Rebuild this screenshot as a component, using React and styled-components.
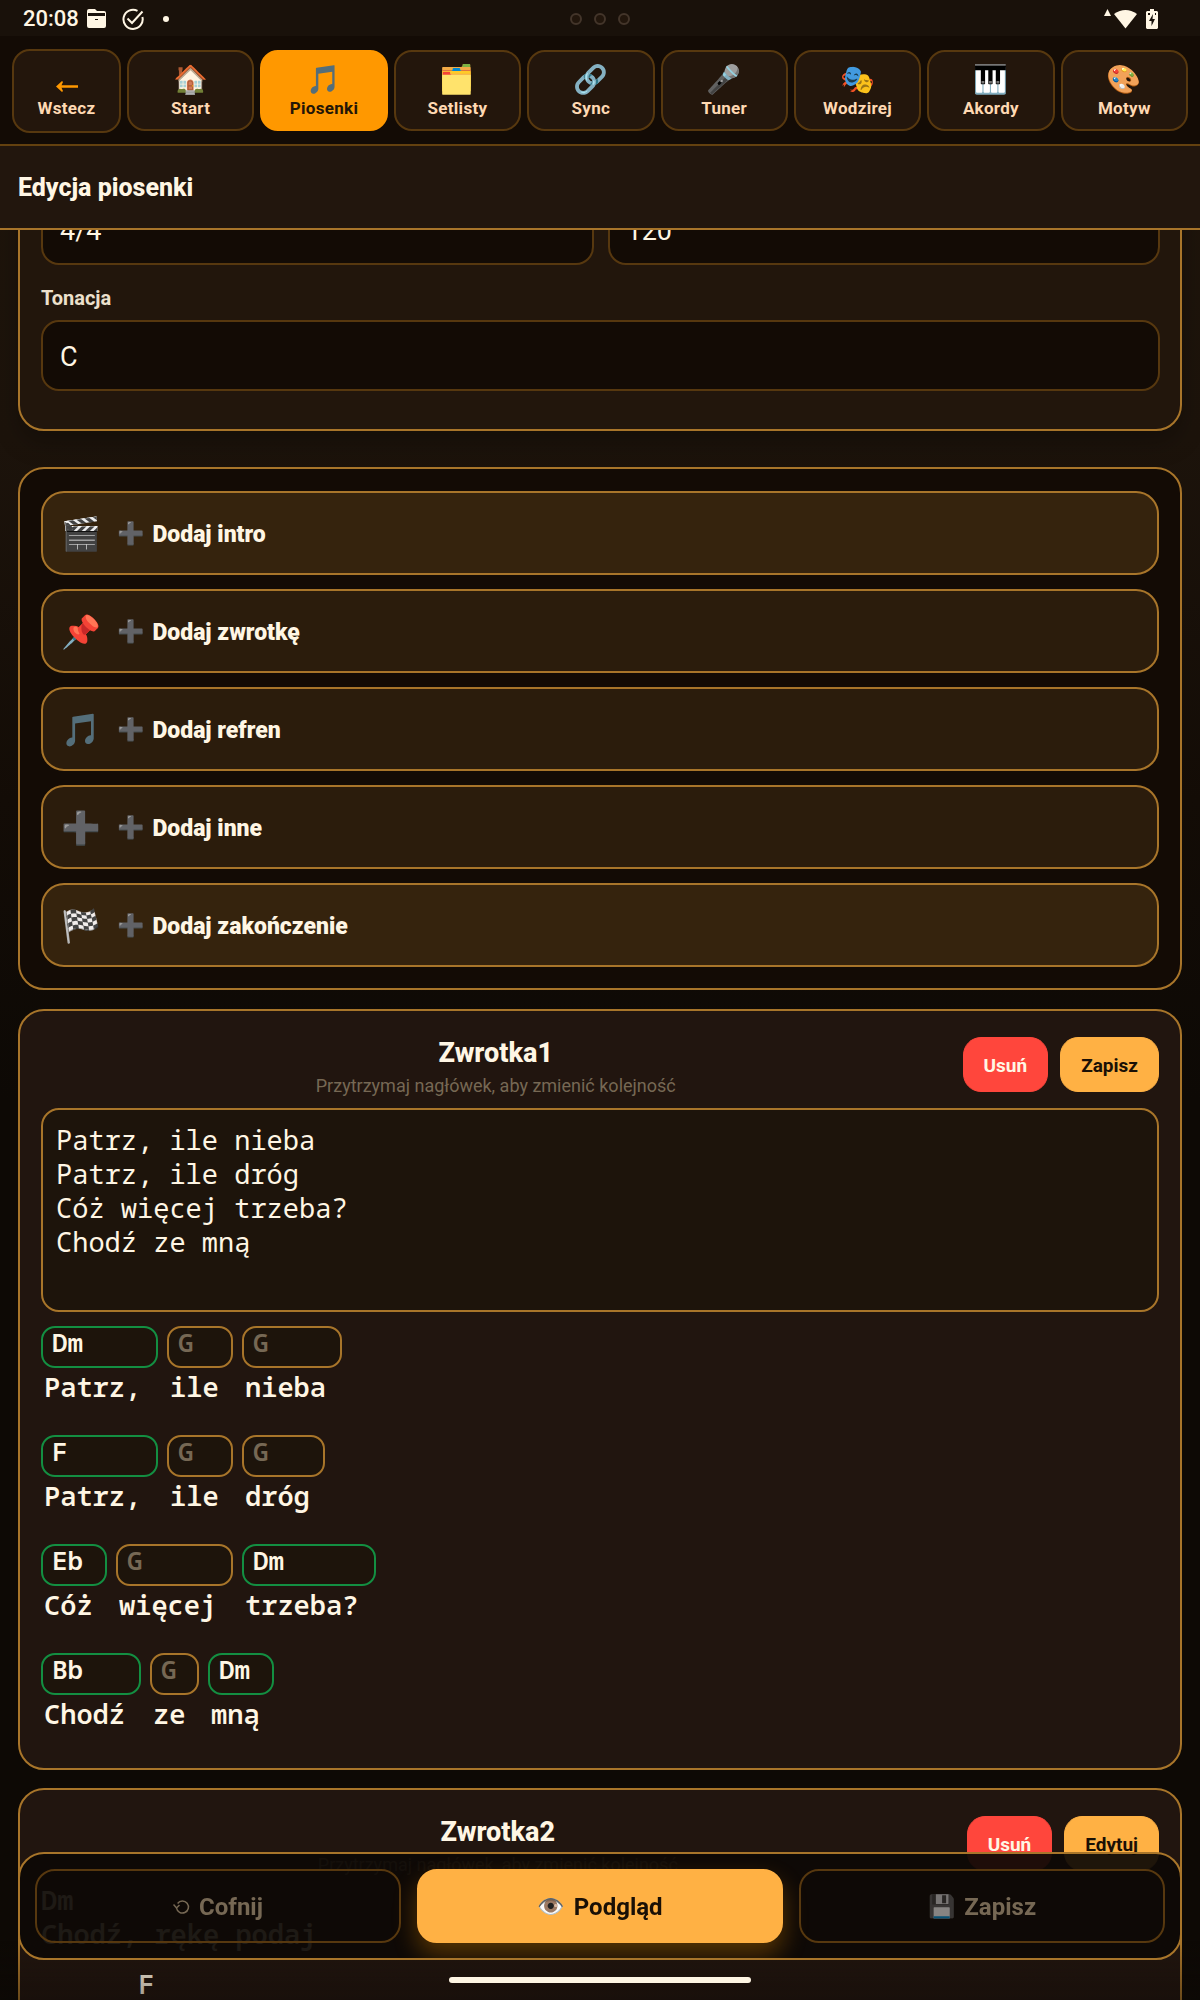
import React, { useState } from "react";
import styled, { createGlobalStyle } from "styled-components";

const c = {
  gold: "#a8752a",
  brown: "#64410f",
  text: "#fff6e4",
  muted: "#766854",
  accent: "#ffb144",
  dark: "#130b05",
};

const MONO = '"Noto Sans Mono", "DejaVu Sans Mono", monospace';
const UI = 'Roboto, "Noto Color Emoji", sans-serif';

/* styled-components */
const GlobalStyle = createGlobalStyle`
  * { box-sizing: border-box; }
  body {
    margin: 0;
    background: #0d0905;
    color: ${c.text};
    font-family: ${UI};
  }
  button, input, textarea { font-family: inherit; color: inherit; }
  h1, h2, p { margin: 0; }
`;

const Screen = styled.div`
  height: 100vh;
  display: flex;
  flex-direction: column;
  overflow: hidden;
  background: linear-gradient(180deg, #1f150b 0%, #1c130b 22%, #130c06 40%, #0d0905 55%, #0d0905 100%);
`;

const StatusBar = styled.div`
  flex: none;
  height: 36px;
  padding: 0 23px;
  display: grid;
  grid-template-columns: 1fr auto 1fr;
  align-items: center;
  background: #19110a;
`;
const StatusGroup = styled.div`
  display: flex;
  align-items: center;
  gap: 12px;
`;
const StatusLeft = styled(StatusGroup)`
  gap: 16px;
`;
const StatusRight = styled(StatusGroup)`
  justify-content: flex-end;
  gap: 9px;
  padding-right: 19px;
`;
const ClockGroup = styled(StatusGroup)`
  gap: 8px;
`;
const Clock = styled.span`
  padding-top: 1px;
  font-size: 22px;
  font-weight: 500;
  line-height: 36px;
`;
const Dot = styled.span`
  width: 12px;
  height: 12px;
  border: 2px solid #43352a;
  border-radius: 50%;
  background: #22160c;
`;
const Bullet = styled.span`
  width: 6px;
  height: 6px;
  margin-left: 3px;
  border-radius: 50%;
  background: ${c.text};
`;

const Nav = styled.nav`
  flex: none;
  height: 110px;
  padding: 1px 12px 0;
  display: flex;
  align-items: center;
  gap: 6px;
  background: ${c.dark};
  border-bottom: 2px solid ${c.brown};
`;
const NavButton = styled.button`
  flex: 1 1 0;
  height: 81px;
  padding: 0;
  display: flex;
  flex-direction: column;
  align-items: center;
  justify-content: center;
  gap: 1px;
  border: 2px solid ${(props) => (props.$active ? "#ff9800" : "#57380f")};
  border-radius: 18px;
  background: ${(props) => (props.$active ? "#ff9800" : "#23160c")};
  color: ${(props) => (props.$active ? "#241607" : "#ffd9b3")};
  font-size: 17px;
  font-weight: 700;
  line-height: 20px;
  letter-spacing: 0.3px;
`;
const BackButton = styled(NavButton)`
  flex: 0 0 109px;
  height: 84px;
  padding-top: 18px;
  gap: 6px;
`;

const TitleBar = styled.header`
  flex: none;
  height: 84px;
  padding: 2px 18px 0;
  display: flex;
  align-items: center;
  background: #22160d;
  border-bottom: 2px solid ${c.gold};
`;
const Title = styled.h1`
  font-size: 25px;
  font-weight: 800;
  line-height: 30px;
`;

const Content = styled.main`
  flex: 1;
  min-height: 0;
  overflow: hidden;
  padding: 0 18px;
`;

const Panel = styled.section`
  padding: 21px;
  border: 2px solid ${c.gold};
  border-radius: 26px;
  background: ${(props) => props.$bg};
`;
const FormPanel = styled(Panel)`
  margin: -59px 0 36px;
  padding: 21px 20px 38px 21px;
  display: grid;
  grid-template-columns: 1fr 1fr;
  column-gap: 14px;
  box-shadow: 0 12px 24px rgba(0, 0, 0, 0.25);
`;
const Field = styled.input`
  width: 100%;
  height: 71px;
  padding: 2px 17px 0;
  border: 2px solid #57380f;
  border-radius: 18px;
  background: ${c.dark};
  font-size: 27px;
  outline: none;
`;
const FieldLabel = styled.label`
  grid-column: 1 / -1;
  padding: 21px 0 10px;
  font-size: 20px;
  font-weight: 700;
  line-height: 24px;
  color: #ece0cd;
`;
const WideField = styled.div`
  grid-column: 1 / -1;
`;

const AddPanel = styled(Panel)`
  display: flex;
  flex-direction: column;
  gap: 14px;
  padding-top: 22px;
`;
const AddButton = styled.button`
  height: 84px;
  padding: 2px 18px 0;
  display: flex;
  align-items: center;
  border: 2px solid ${c.gold};
  border-radius: 23px;
  background: ${(props) => (props.$strong ? "#35230d" : "#2b1c0c")};
  font-size: 23px;
  font-weight: 900;
  text-align: left;
`;
const AddIcon = styled.span`
  width: 56px;
  display: flex;
`;
const AddText = styled.span`
  display: flex;
  align-items: center;
  gap: 8px;
`;

const Emoji = styled.span`
  font-family: "Noto Color Emoji", sans-serif;
  font-size: ${(props) => props.$size}px;
  line-height: 1.2;
  opacity: ${(props) => (props.$dim ? 0.5 : 1)};
`;

const Verse = styled(Panel)`
  margin-top: ${(props) => props.$top}px;
  padding-bottom: 20px;
`;
const VerseHeader = styled.div`
  display: flex;
  align-items: flex-start;
  gap: 12px;
  padding-bottom: 6px;
`;
const VerseHeading = styled.div`
  flex: 1;
  padding-top: 4px;
  text-align: center;
`;
const VerseTitle = styled.h2`
  font-size: 27px;
  font-weight: 800;
  line-height: 34px;
`;
const Hint = styled.p`
  font-size: 18px;
  line-height: 32px;
  color: ${c.muted};
`;
const SmallButton = styled.button`
  height: 55px;
  margin-top: 5px;
  padding: 2px 20px 0;
  border: 1px solid ${(props) => (props.$danger ? "#ff463c" : c.accent)};
  border-radius: 18px;
  background: ${(props) => (props.$danger ? "#ff463c" : c.accent)};
  color: ${(props) => (props.$danger ? c.text : "#1a1006")};
  font-size: 19px;
  font-weight: 700;
`;
const Lyrics = styled.textarea`
  display: block;
  width: 100%;
  height: 204px;
  padding: 13px;
  border: 2px solid ${c.gold};
  border-radius: 18px;
  background: #1d140b;
  font-family: ${MONO};
  font-size: 27px;
  line-height: 34px;
  resize: none;
  outline: none;
`;

const ChordLine = styled.div`
  display: flex;
  gap: 9px;
  padding-top: 14px;
  height: 109px;
`;
const Word = styled.label`
  width: ${(props) => props.$len * 17 + 15}px;
  font-family: ${MONO};
  font-size: 27px;
  font-weight: 600;
  line-height: 38px;
  white-space: pre;
`;
const Chord = styled.input`
  display: block;
  width: 100%;
  height: 42px;
  padding: 0 8px 10px 9px;
  border: 2px solid ${(props) => (props.$set ? "#138f42" : c.gold)};
  border-radius: 14px;
  background: #1d140b;
  font-family: ${MONO};
  font-size: 26px;
  font-weight: 600;
  line-height: 28px;
  outline: none;
  &::placeholder {
    color: ${c.muted};
    opacity: 1;
  }
`;
const WordText = styled.span`
  padding-left: 3px;
`;
const Preview = styled.div`
  margin-top: -4px;
  font-family: ${MONO};
  font-size: 27px;
  font-weight: 600;
  line-height: 34px;
  white-space: pre;
`;
const PreviewLine = styled.div`
  margin-bottom: 16px;
`;

const Footer = styled.footer`
  position: fixed;
  left: 0;
  right: 0;
  bottom: 0;
  padding: 0 18px 17px;
  background: linear-gradient(180deg, rgba(13, 9, 5, 0) 60%, rgba(13, 9, 5, 0.4) 100%);
`;
const ActionBar = styled.div`
  height: 108px;
  padding: 15px;
  display: flex;
  gap: 16px;
  overflow: hidden;
  border: 2px solid ${c.gold};
  border-radius: 26px;
  background: rgba(13, 9, 5, 0.93);
`;
const Action = styled.button`
  flex: 1 1 0;
  height: 74px;
  padding-top: 3px;
  display: flex;
  align-items: center;
  justify-content: center;
  gap: 9px;
  border: 2px solid ${(props) => (props.$primary ? c.accent : "#57380f")};
  border-radius: 20px;
  background: ${(props) => (props.$primary ? c.accent : "transparent")};
  box-shadow: ${(props) =>
    props.$primary ? "0 12px 24px rgba(255, 152, 0, 0.3)" : "none"};
  color: ${(props) => (props.$primary ? "#1a1006" : c.muted)};
  font-size: 24px;
  font-weight: 700;
`;
const HomeIndicator = styled.div`
  width: 302px;
  height: 6px;
  margin: 17px auto 0;
  border-radius: 3px;
  background: ${c.text};
`;

/* icons */
const FolderIcon = () => (
  <svg width="19" height="19" viewBox="0 0 19 19">
    <path
      fill={c.text}
      fillRule="evenodd"
      d="M2 0h6l2 2h7q2 0 2 2v13q0 2-2 2H2q-2 0-2-2V2q0-2 2-2zM1 4v3h17V4zM8 10v1h3v-1z"
    />
  </svg>
);

const CheckIcon = () => (
  <svg width="22" height="22" viewBox="0 0 22 22" fill="none" stroke={c.text} strokeWidth="2">
    <path d="M15.5 2.8A9.6 9.6 0 1 0 20.4 9" />
    <path d="M5.5 10.5l4.5 4.5L20.5 3.5" />
  </svg>
);

const SignalIcon = () => (
  <svg width="33" height="20" viewBox="0 0 33 20" fill={c.text}>
    <path d="M3.5 0L7 7H0z" />
    <path d="M10 5Q21.5-3 33 5L21.5 19.5z" />
  </svg>
);

const BatteryIcon = () => (
  <svg width="12" height="20" viewBox="0 0 12 20">
    <path fill={c.text} d="M4 0h4v2h3l1 1v16l-1 1H1l-1-1V3l1-1h3z" />
    <path fill="#19110a" d="M7 5L3 12h2.5v5L9 10H6.500zM2 4h2v2H2zM9 4h1v2H9z" />
  </svg>
);

const BackIcon = () => (
  <svg width="22" height="11" viewBox="0 0 22 11">
    <path fill="#ff9800" d="M0 5.5L6 0l1 1-1.500 3.200H22v2.600H5.500L7 10l-1 1z" />
  </svg>
);

const UndoIcon = () => (
  <svg width="17" height="16" viewBox="0 0 17 16" fill="none" stroke={c.muted}>
    <path strokeWidth="1.5" d="M3.5 9A6 6 0 1 0 4.6 4.500" />
    <path strokeWidth="1.5" d="M.5 5.500L3.500 9l3-3" />
  </svg>
);

const navItems = [
  ["🏠", "Start"],
  ["🎵", "Piosenki"],
  ["🗂️", "Setlisty"],
  ["🔗", "Sync"],
  ["🎤", "Tuner"],
  ["🎭", "Wodzirej"],
  ["🎹", "Akordy"],
  ["🎨", "Motyw"],
];

const addItems = [
  ["🎬", "Dodaj intro", true],
  ["📌", "Dodaj zwrotkę", false],
  ["🎵", "Dodaj refren", false],
  ["➕", "Dodaj inne", false],
  ["🏁", "Dodaj zakończenie", true],
];

const lines = [
  [["Dm", "Patrz,"], ["", "ile"], ["", "nieba"]],
  [["F", "Patrz,"], ["", "ile"], ["", "dróg"]],
  [["Eb", "Cóż"], ["", "więcej"], ["Dm", "trzeba?"]],
  [["Bb", "Chodź"], ["", "ze"], ["Dm", "mną"]],
];

function VerseTop({ title, action }) {
  return (
    <VerseHeader>
      <VerseHeading>
        <VerseTitle>{title}</VerseTitle>
        <Hint>Przytrzymaj nagłówek, aby zmienić kolejność</Hint>
      </VerseHeading>
      <SmallButton $danger>Usuń</SmallButton>
      <SmallButton>{action}</SmallButton>
    </VerseHeader>
  );
}

function App() {
  const [lyrics, setLyrics] = useState(
    "Patrz, ile nieba\nPatrz, ile dróg\nCóż więcej trzeba?\nChodź ze mną"
  );

  return (
    <Screen>
      <GlobalStyle />
      <StatusBar>
        <StatusLeft>
          <ClockGroup>
            <Clock>20:08</Clock>
            <FolderIcon />
          </ClockGroup>
          <CheckIcon />
          <Bullet />
        </StatusLeft>
        <StatusGroup>
          <Dot />
          <Dot />
          <Dot />
        </StatusGroup>
        <StatusRight>
          <SignalIcon />
          <BatteryIcon />
        </StatusRight>
      </StatusBar>

      <Nav>
        <BackButton>
          <BackIcon />
          Wstecz
        </BackButton>
        {navItems.map(([icon, label]) => (
          <NavButton key={label} $active={label === "Piosenki"}>
            <Emoji $size={28}>{icon}</Emoji>
            {label}
          </NavButton>
        ))}
      </Nav>

      <TitleBar>
        <Title>Edycja piosenki</Title>
      </TitleBar>

      <Content>
        <FormPanel $bg="#22160c">
          <Field aria-label="Metrum" defaultValue="4/4" />
          <Field aria-label="Tempo" defaultValue="120" />
          <FieldLabel htmlFor="key">Tonacja</FieldLabel>
          <WideField>
            <Field id="key" defaultValue="C" />
          </WideField>
        </FormPanel>

        <AddPanel $bg={c.dark}>
          {addItems.map(([icon, label, strong]) => (
            <AddButton key={label} $strong={strong}>
              <AddIcon>
                <Emoji $size={32}>{icon}</Emoji>
              </AddIcon>
              <AddText>
                <Emoji $size={22}>➕</Emoji>
                {label}
              </AddText>
            </AddButton>
          ))}
        </AddPanel>

        <Verse $bg="#21150f" $top={19}>
          <VerseTop title="Zwrotka1" action="Zapisz" />
          <Lyrics
            aria-label="Tekst zwrotki"
            value={lyrics}
            onChange={(e) => setLyrics(e.target.value)}
          />
          {lines.map((line, i) => (
            <ChordLine key={i}>
              {line.map(([chord, word]) => (
                <Word key={word} $len={word.length}>
                  <Chord defaultValue={chord} placeholder="G" $set={!!chord} />
                  <WordText>{word}</WordText>
                </Word>
              ))}
            </ChordLine>
          ))}
        </Verse>

        <Verse $bg="#21150f" $top={18}>
          <VerseTop title="Zwrotka2" action="Edytuj" />
          <Preview>
            <PreviewLine>{"Dm\nChodź, rękę podaj"}</PreviewLine>
            <PreviewLine>{"      F"}</PreviewLine>
          </Preview>
        </Verse>
      </Content>

      <Footer>
        <ActionBar>
          <Action disabled>
            <UndoIcon />
            Cofnij
          </Action>
          <Action $primary>
            <Emoji $size={22}>👁️</Emoji>
            Podgląd
          </Action>
          <Action disabled>
            <Emoji $size={22} $dim>💾</Emoji>
            Zapisz
          </Action>
        </ActionBar>
        <HomeIndicator />
      </Footer>
    </Screen>
  );
}

export default App;
